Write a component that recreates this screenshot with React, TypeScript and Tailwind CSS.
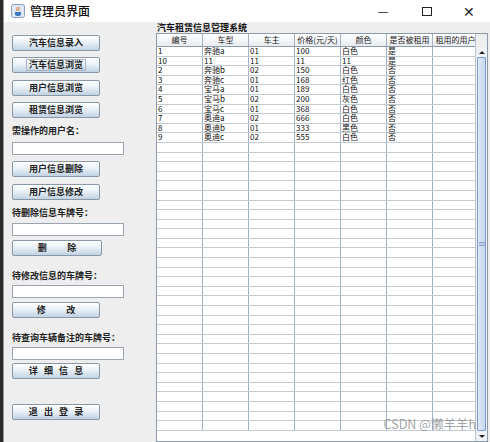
import React from "react";

type Car = {
  id: string;
  model: string;
  owner: string;
  price: string;
  color: string;
  rented: string;
  user: string;
};

const cars: Car[] = [
  { id: "1", model: "奔驰a", owner: "01", price: "100", color: "白色", rented: "是", user: "" },
  { id: "10", model: "11", owner: "11", price: "11", color: "11", rented: "是", user: "" },
  { id: "2", model: "奔驰b", owner: "02", price: "150", color: "白色", rented: "否", user: "" },
  { id: "3", model: "奔驰c", owner: "01", price: "168", color: "红色", rented: "否", user: "" },
  { id: "4", model: "宝马a", owner: "01", price: "189", color: "白色", rented: "否", user: "" },
  { id: "5", model: "宝马b", owner: "02", price: "200", color: "灰色", rented: "否", user: "" },
  { id: "6", model: "宝马c", owner: "01", price: "368", color: "白色", rented: "否", user: "" },
  { id: "7", model: "奥迪a", owner: "02", price: "666", color: "白色", rented: "否", user: "" },
  { id: "8", model: "奥迪b", owner: "01", price: "333", color: "黑色", rented: "否", user: "" },
  { id: "9", model: "奥迪c", owner: "02", price: "555", color: "白色", rented: "否", user: "" },
];

const headers = ["编号", "车型", "车主", "价格(元/天)", "颜色", "是否被租用", "租用的用户"];

const FONT = { fontFamily: '"Noto Sans CJK SC", "Liberation Sans", sans-serif' };

export default function App() {
  // empty rows to fill the table area
  const blanks = Array.from({ length: 30 }, (_, i) => i);

  return (
    <div className="flex h-[442px] w-[490px] overflow-hidden bg-white" style={FONT}>
      {/* dark edge */}
      <div className="w-[3px] shrink-0 bg-[#2a2a2a]" />

      <div className="flex min-w-0 flex-1 flex-col border-l border-[#9a9a9a]">
        {/* TITLE BAR */}
        <div className="flex h-[22px] shrink-0 items-center bg-white">
          <JavaIcon />
          <span className="ml-[5px] text-[12px] font-medium text-[#111]">管理员界面</span>
          <div className="ml-auto flex items-center text-[#222]">
            <span className="w-[42px] text-center text-[12px] leading-none">—</span>
            <span className="ml-[2px] flex w-[42px] justify-center">
              <span className="block h-[9px] w-[10px] border border-[#222]" />
            </span>
            <span className="w-[42px] text-center text-[14px] leading-none">✕</span>
          </div>
        </div>

        {/* BODY */}
        <div className="flex min-h-0 flex-1 bg-[#eeeeee]">
          {/* LEFT PANEL */}
          <div className="flex w-[152px] shrink-0 flex-col pl-[8px]">
            <Btn className="mt-[13px]">汽车信息录入</Btn>
            <Btn className="mt-[6px]" focused>
              汽车信息浏览
            </Btn>
            <Btn className="mt-[7px]">用户信息浏览</Btn>
            <Btn className="mt-[6px]">租赁信息浏览</Btn>
            <Label className="mt-[7px]">需操作的用户名：</Label>
            <Input className="mt-[5px]" />
            <Btn className="mt-[6px]">用户信息删除</Btn>
            <Btn className="mt-[7px]">用户信息修改</Btn>
            <Label className="mt-[7px]">待删除信息车牌号：</Label>
            <Input className="mt-[4px]" />
            <Btn className="mt-[4px] w-[90px]">删&nbsp;&nbsp;&nbsp;&nbsp;&nbsp;&nbsp;&nbsp;&nbsp;&nbsp;&nbsp;除</Btn>
            <Label className="mt-[14px]">待修改信息的车牌号：</Label>
            <Input className="mt-[3px]" />
            <Btn className="mt-[4px]">修&nbsp;&nbsp;&nbsp;&nbsp;&nbsp;&nbsp;&nbsp;&nbsp;&nbsp;&nbsp;改</Btn>
            <Label className="mt-[14px]">待查询车辆备注的车牌号：</Label>
            <Input className="mt-[3px]" />
            <Btn className="mt-[3px]">详&nbsp;&nbsp;&nbsp;细&nbsp;&nbsp;&nbsp;信&nbsp;&nbsp;&nbsp;息</Btn>
            <Btn className="mt-[25px]">退&nbsp;&nbsp;&nbsp;出&nbsp;&nbsp;&nbsp;登&nbsp;&nbsp;&nbsp;录</Btn>
          </div>

          {/* RIGHT PANEL */}
          <div className="relative flex min-w-0 flex-1 flex-col">
            <div className="h-[11px] pl-[1px] text-[9px] font-bold leading-[11px] text-[#111]">
              汽车租赁信息管理系统
            </div>

            <div className="flex min-h-0 flex-1 border border-[#8f9aa8] bg-white">
              {/* TABLE */}
              <div className="w-[322px] overflow-hidden">
                <div className="flex h-[13px] border-b border-[#8f9aa8] bg-gradient-to-b from-[#ffffff] to-[#e8ecf0]">
                  {headers.map((h) => (
                    <div
                      key={h}
                      className="w-[46px] shrink-0 overflow-hidden whitespace-nowrap border-r border-[#a8b2be] text-center text-[8px] leading-[12px] text-[#222]"
                    >
                      {h}
                    </div>
                  ))}
                </div>
                {cars.map((c) => (
                  <Row key={c.id} cells={[c.id, c.model, c.owner, c.price, c.color, c.rented, c.user]} />
                ))}
                {blanks.map((i) => (
                  <Row key={"b" + i} cells={["", "", "", "", "", "", ""]} />
                ))}
              </div>

              {/* SCROLLBAR */}
              <div className="flex w-[12px] shrink-0 flex-col border-l border-[#b8c4d0] bg-[#eef2f6]">
                <div className="h-[13px] bg-[#eeeeee]" />
                <div className="flex h-[10px] items-center justify-center">
                  <span className="block h-0 w-0 border-x-[3px] border-b-[3px] border-x-transparent border-b-[#222]" />
                </div>
                <div className="mx-[1px] flex flex-1 items-center justify-center rounded-[1px] border border-[#7f9ad0] bg-gradient-to-r from-[#dde8f6] to-[#c8d8ee]">
                  <span className="block h-[4px] w-[6px] border-y border-[#8ea6c8] bg-[#b8cbe4]" />
                </div>
                <div className="flex h-[10px] items-center justify-center">
                  <span className="block h-0 w-0 border-x-[3px] border-t-[3px] border-x-transparent border-t-[#222]" />
                </div>
              </div>
            </div>

            {/* watermark */}
            <span className="absolute bottom-[8px] right-[12px] text-[12.5px] text-[#8a8a8a]/80">
              CSDN @懒羊羊h
            </span>
          </div>
          <div className="w-[2px] shrink-0 bg-[#eeeeee]" />
        </div>
      </div>
    </div>
  );
}

function Row({ cells }: { cells: string[] }) {
  return (
    <div className="flex h-[9.6px] border-b border-[#c4cad2]">
      {cells.map((v, i) => (
        <div
          key={i}
          className="h-full w-[46px] shrink-0 overflow-hidden whitespace-nowrap border-r border-[#a0b0c6] pl-[1px] text-[8px] leading-[8.6px] text-[#111]"
        >
          {v}
        </div>
      ))}
    </div>
  );
}

function Btn({
  children,
  className = "",
  focused = false,
}: {
  children: React.ReactNode;
  className?: string;
  focused?: boolean;
}) {
  return (
    <div
      className={
        "flex h-[16px] w-[88px] items-center justify-center rounded-[2px] border border-[#8a98a8] bg-gradient-to-b from-[#ffffff] via-[#e6eef6] to-[#c2d2e2] text-[9px] font-bold text-[#222] " +
        className
      }
    >
      <span className={focused ? "border border-[#a8b4c4] px-[2px] leading-[10px]" : "leading-[10px]"}>
        {children}
      </span>
    </div>
  );
}

function Label({ children, className = "" }: { children: React.ReactNode; className?: string }) {
  return <div className={"h-[12px] text-[9px] font-bold leading-[12px] text-[#222] " + className}>{children}</div>;
}

function Input({ className = "" }: { className?: string }) {
  return <div className={"h-[13px] w-[112px] border border-[#9aa4b0] bg-white " + className} />;
}

function JavaIcon() {
  return (
    <svg width="14" height="14" viewBox="0 0 14 14" className="ml-[7px]">
      <rect x="0.5" y="0.5" width="13" height="13" rx="2" fill="#dfe8f4" stroke="#8aa0bc" />
      <path d="M4 8 h6 v2 a2 2 0 0 1 -2 2 h-2 a2 2 0 0 1 -2 -2z" fill="#3a78c0" />
      <path d="M6 3 c1 1 -1 2 0 4 M8 3 c1 1 -1 2 0 4" stroke="#e07020" strokeWidth="1" fill="none" />
    </svg>
  );
}
